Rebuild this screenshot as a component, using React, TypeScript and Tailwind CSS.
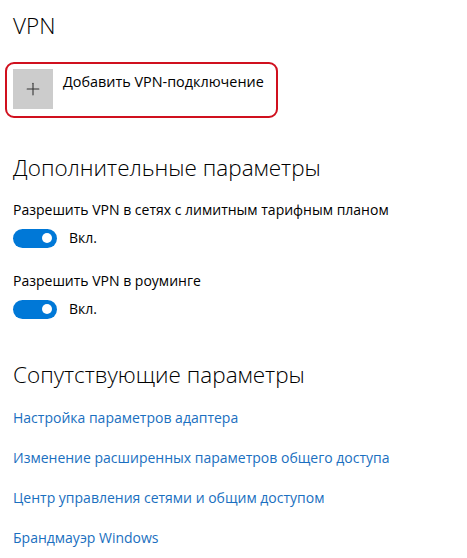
import { Plus } from "lucide-react";

function Toggle({ label }: { label: string }) {
  return (
    <div className="flex flex-col">
      <span className="text-[14px] leading-5 text-black">{label}</span>
      <div className="mt-[8px] flex items-center">
        <span className="flex h-[19px] w-[44px] items-center justify-end rounded-full bg-[#0078d7] pr-[5px]">
          <span className="h-[10px] w-[10px] rounded-full bg-white" />
        </span>
        <span className="ml-[12px] text-[14px] leading-5 text-black">Вкл.</span>
      </div>
    </div>
  );
}

const links = [
  "Настройка параметров адаптера",
  "Изменение расширенных параметров общего доступа",
  "Центр управления сетями и общим доступом",
  "Брандмауэр Windows",
];

export default function App() {
  return (
    <div className="h-[558px] w-[467px] overflow-hidden bg-white pt-[10px] font-['Open_Sans','Noto_Sans',sans-serif]">
      <h1 className="pl-[13px] text-[22.5px] font-light leading-8 text-black">VPN</h1>

      <div className="ml-[5px] mt-[20px] flex h-[56px] w-[273px] items-start rounded-[9px] border-2 border-[#d0101e] pl-[6px] pt-[5px]">
        <div className="flex h-[40px] w-[40px] items-center justify-center bg-[#cccccc]">
          <Plus className="h-[20px] w-[20px] text-[#333]" strokeWidth={1.3} />
        </div>
        <span className="ml-[10px] mt-[3px] text-[14.4px] leading-5 text-black">Добавить VPN-подключение</span>
      </div>

      <div className="px-[13px]">
        <h2 className="mt-[34px] text-[22.5px] font-light leading-8 text-black">Дополнительные параметры</h2>

        <div className="mt-[16px] flex flex-col gap-[23px]">
          <Toggle label="Разрешить VPN в сетях с лимитным тарифным планом" />
          <Toggle label="Разрешить VPN в роуминге" />
        </div>

        <h2 className="mt-[40px] text-[22.5px] font-light leading-8 text-black">Сопутствующие параметры</h2>

        <div className="mt-[17px] flex flex-col gap-[20px]">
          {links.map((l) => (
            <a key={l} className="text-[14px] leading-5 text-[#1a6fc0]">
              {l}
            </a>
          ))}
        </div>
      </div>
    </div>
  );
}
